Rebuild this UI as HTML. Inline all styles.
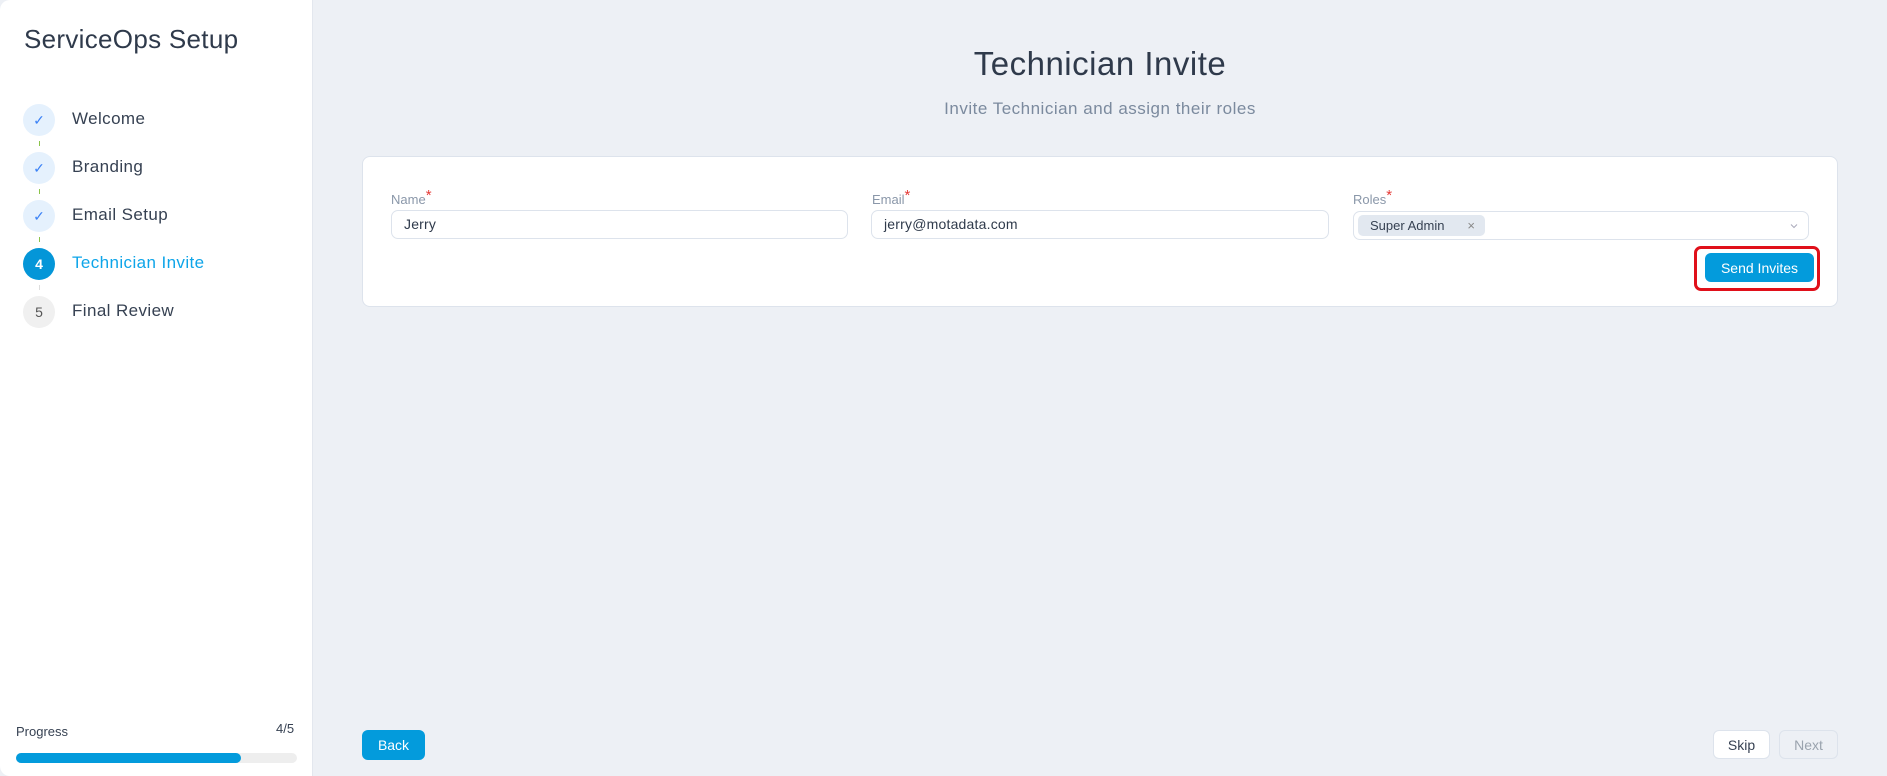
<!DOCTYPE html>
<html><head><meta charset="utf-8"><style>
*{box-sizing:border-box;margin:0;padding:0}
body{width:1887px;height:776px;background:#edf0f5;font-family:"Liberation Sans",sans-serif;color:#364152;position:relative;overflow:hidden}
.abs{position:absolute}
.side{left:0;top:0;width:313px;height:776px;background:#fff;border-right:1px solid #e3e7ee;border-radius:10px 0 0 10px}
.title{left:24px;top:24px;font-size:26px;color:#2f3a4b;letter-spacing:0.3px}
.circ{width:32px;height:32px;border-radius:50%;left:23px;display:flex;align-items:center;justify-content:center;font-size:14px}
.done{background:#e5f1fd;color:#3b82f6}
.lbl{left:72px;font-size:17px;color:#364152;letter-spacing:0.4px}
.dash{left:39px;width:1px;height:5px;background:#8bc34a}
.card{left:362px;top:156px;width:1476px;height:151px;background:#fff;border:1px solid #dde3ec;border-radius:8px}
.fl{font-size:13px;color:#8a97a9}
.fl b{color:#e53935;font-weight:normal;font-size:15px;position:relative;top:-4px}
.inp{height:29px;border:1px solid #dde3ec;border-radius:7px;background:#fff;font-size:14px;padding-left:12px;line-height:27px;color:#2f3a4b;letter-spacing:0.2px}
.btn{border-radius:6px;font-size:14px;display:flex;align-items:center;justify-content:center}
</style></head><body>
<div class="abs side"></div>
<div class="abs title">ServiceOps Setup</div>
<div class="abs circ done" style="top:104px">✓</div><div class="abs lbl" style="top:109px">Welcome</div>
<div class="abs dash" style="top:141px"></div>
<div class="abs circ done" style="top:152px">✓</div><div class="abs lbl" style="top:157px">Branding</div>
<div class="abs dash" style="top:189px"></div>
<div class="abs circ done" style="top:200px">✓</div><div class="abs lbl" style="top:205px">Email Setup</div>
<div class="abs dash" style="top:237px"></div>
<div class="abs circ" style="top:248px;background:#0496d8;color:#fff;font-weight:bold">4</div><div class="abs lbl" style="top:253px;color:#0ea5e9">Technician Invite</div>
<div class="abs dash" style="top:285px;background:#ddd"></div>
<div class="abs circ" style="top:296px;background:#f0f0f0;color:#555">5</div><div class="abs lbl" style="top:301px">Final Review</div>
<div class="abs" style="left:16px;top:724px;font-size:13px">Progress</div>
<div class="abs" style="left:276px;top:721px;font-size:13px">4/5</div>
<div class="abs" style="left:16px;top:753px;width:281px;height:10px;border-radius:5px;background:#eee"><div style="width:225px;height:10px;border-radius:5px;background:#039bdc"></div></div>

<div class="abs" style="left:313px;width:1574px;top:45px;text-align:center;font-size:33px;color:#2f3a4b;letter-spacing:0.5px">Technician Invite</div>
<div class="abs" style="left:313px;width:1574px;top:99px;text-align:center;font-size:17px;color:#7b8a9e;letter-spacing:0.5px">Invite Technician and assign their roles</div>

<div class="abs card"></div>
<div class="abs fl" style="left:391px;top:191px">Name<b>*</b></div>
<div class="abs inp" style="left:391px;top:210px;width:457px">Jerry</div>
<div class="abs fl" style="left:872px;top:191px">Email<b>*</b></div>
<div class="abs inp" style="left:871px;top:210px;width:458px">jerry@motadata.com</div>
<div class="abs fl" style="left:1353px;top:191px">Roles<b>*</b></div>
<div class="abs inp" style="left:1353px;top:211px;width:456px;padding:0"></div>
<div class="abs" style="left:1358px;top:215px;width:127px;height:21px;background:#e2e8f0;border-radius:5px;font-size:13px;line-height:21px;padding-left:12px">Super Admin<span style="position:absolute;right:10px;color:#888">×</span></div>
<svg class="abs" style="left:1789px;top:222px" width="10" height="8" viewBox="0 0 10 8"><path d="M2 2.5 L5 5.5 L8 2.5" fill="none" stroke="#aab" stroke-width="1"/></svg>
<div class="abs" style="left:1694px;top:246px;width:126px;height:45px;border:3px solid #e0101a;border-radius:7px"></div>
<div class="abs btn" style="left:1705px;top:253px;width:109px;height:29px;background:#039bdc;color:#fff">Send Invites</div>

<div class="abs btn" style="left:362px;top:730px;width:63px;height:30px;background:#039bdc;color:#fff">Back</div>
<div class="abs btn" style="left:1713px;top:730px;width:57px;height:29px;background:#fff;border:1px solid #dde3ec;color:#364152">Skip</div>
<div class="abs btn" style="left:1779px;top:730px;width:59px;height:29px;background:#edf0f5;border:1px solid #dde3ec;color:#9aa3ae">Next</div>
</body></html>
